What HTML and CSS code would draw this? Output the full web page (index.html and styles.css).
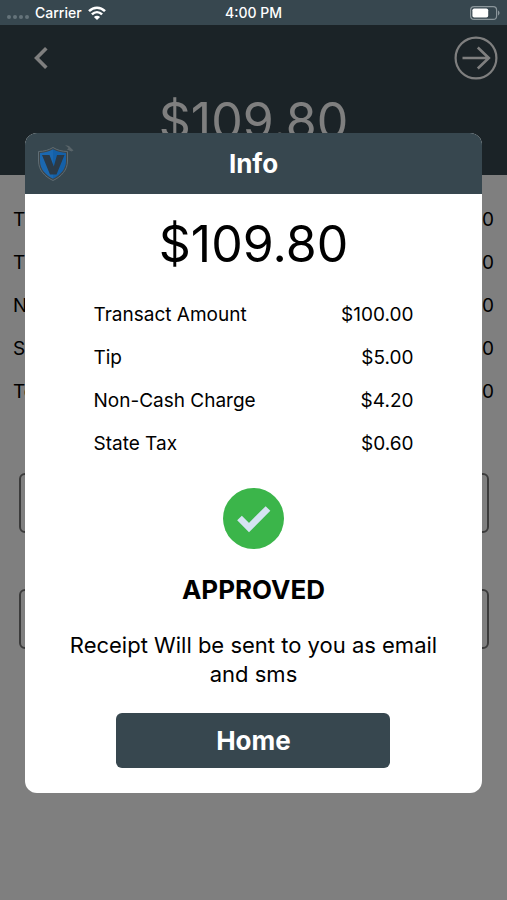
FILE: index.html
```html
<!DOCTYPE html>
<html lang="en">

<head>
  <meta charset="UTF-8">
  <meta name="viewport" content="width=device-width, initial-scale=1.0">
  <title>Payment Info</title>
  <link rel="stylesheet" href="styles.css">
</head>

<body>
  <div class="status-bar">
    <div class="status-left">
      <span class="signal"><i></i><i></i><i></i><i></i></span>
      <span>Carrier</span>
      <svg class="wifi" viewBox="0 0 18 14" width="18" height="14" fill="none" stroke="#fff" stroke-width="2.5">
        <path d="M1 5.2C5.6 .6 12.4 .6 17 5.2" />
        <path d="M3.9 8.3C6.9 5.4 11.1 5.4 14.1 8.3" />
        <path d="M9 14L5.9 10.9C7.6 9.2 10.4 9.2 12.1 10.9Z" fill="#fff" stroke="none" />
      </svg>
    </div>
    <span class="status-time">4:00 PM</span>
    <div class="status-right">
      <svg viewBox="0 0 30 14" width="30" height="14">
        <rect x=".6" y=".6" width="26" height="12.8" rx="3.5" fill="none" stroke="#8b969b" stroke-width="1.2" />
        <rect x="2.4" y="2.4" width="15.8" height="9.2" rx="1.8" fill="#fff" />
        <path d="M28 4.6C30 5.4 30 8.6 28 9.4Z" fill="#8b969b" />
      </svg>
    </div>
  </div>

  <div class="screen">
    <div class="page">
      <div class="page-header">
        <div class="page-nav">
          <button class="icon-button" aria-label="Back">
            <svg viewBox="0 0 14 22" width="14" height="22" fill="none" stroke="#fff" stroke-width="3.6">
              <path d="M12.3 1.3L2.6 11L12.3 20.7" />
            </svg>
          </button>
          <button class="icon-button" aria-label="Next">
            <svg viewBox="0 0 44 44" width="44" height="44" fill="none" stroke="#fff" stroke-width="2.2">
              <circle cx="22" cy="22" r="20.4" />
              <path d="M8.5 22H34.5M23.8 11.5L34.8 22L23.8 32.5" stroke-width="2.6" />
            </svg>
          </button>
        </div>
        <div class="amount">$109.80</div>
      </div>
      <dl class="rows page-rows">
        <div class="row"><dt>Transact Amount</dt><dd>$100.00</dd></div>
        <div class="row"><dt>Tip</dt><dd>$5.00</dd></div>
        <div class="row"><dt>Non-Cash Charge</dt><dd>$4.20</dd></div>
        <div class="row"><dt>State Tax</dt><dd>$0.60</dd></div>
        <div class="row"><dt>Total</dt><dd>$109.80</dd></div>
      </dl>
      <div class="page-inputs">
        <input type="email" aria-label="Email">
        <input type="tel" aria-label="Phone number">
      </div>
    </div>

    <div class="overlay">
      <div class="modal" role="dialog" aria-labelledby="modal-title">
        <div class="modal-header">
          <svg class="logo" viewBox="0 0 38 38" width="38" height="38">
            <path d="M1.5 7.5C7 7.5 12 6 16 3.5C20 6 25 7.5 30.5 7.5V17C30.5 26 24.5 32.5 16 36.5C7.5 32.5 1.5 26 1.5 17Z" fill="#3d4549" stroke="#5f6d74" stroke-width="1" />
            <path d="M3 9C8 8.8 12 7.5 16 5.3V34.8C8.500 31 3 25 3 17Z" fill="#1b68b0" />
            <path d="M16 5.3C20 7.5 24 8.8 29 9V17C29 25 23.5 31 16 34.8Z" fill="#1460a8" />
            <path d="M5 11H12.5L16.8 22.5L20 11H27.5L19.5 30.5H13Z" fill="#2b3a47" />
            <path d="M28 1L32 2L36.5 6.5L34.5 7.5L30 5.5L31.5 4Z" fill="#596469" />
          </svg>
          <h1 id="modal-title">Info</h1>
        </div>
        <div class="modal-body">
          <div class="amount">$109.80</div>
          <dl class="rows modal-rows">
            <div class="row"><dt>Transact Amount</dt><dd>$100.00</dd></div>
            <div class="row"><dt>Tip</dt><dd>$5.00</dd></div>
            <div class="row"><dt>Non-Cash Charge</dt><dd>$4.20</dd></div>
            <div class="row"><dt>State Tax</dt><dd>$0.60</dd></div>
          </dl>
          <svg class="check" viewBox="0 0 61 61" width="61" height="61">
            <circle cx="30.5" cy="30.5" r="30.5" fill="#3bb54a" />
            <path d="M16.5 30L26 39.5L45 20.5" fill="none" stroke="#d5e3f2" stroke-width="6.6" />
          </svg>
          <h2>APPROVED</h2>
          <p class="message">Receipt Will be sent to you as email and sms</p>
          <button class="home-button">Home</button>
        </div>
      </div>
    </div>
  </div>
</body>

</html>
```
FILE: styles.css
```css
* {
  box-sizing: border-box;
}

body {
  margin: 0;
  min-height: 100vh;
  display: flex;
  flex-direction: column;
  font-family: Inter, "Liberation Sans", sans-serif;
  color: #000;
  background: #fff;
}

button {
  font-family: inherit;
  border: none;
  cursor: pointer;
}

.status-bar {
  display: grid;
  grid-template-columns: 1fr auto 1fr;
  align-items: center;
  height: 25px;
  padding: 0 7px;
  background: #37474f;
  color: #fff;
  font-size: 14px;
  font-weight: 500;
}

.status-left {
  display: flex;
  align-items: center;
  gap: 6px;
}

.signal {
  display: flex;
  gap: 2px;
  padding-top: 8px;
}

.signal i {
  width: 4px;
  height: 4px;
  border-radius: 50%;
  background: #65737a;
}

.status-right {
  display: flex;
  justify-content: flex-end;
}

.screen {
  position: relative;
  flex: 1;
}

.page-header {
  height: 150px;
  background: #37474f;
  color: #fff;
}

.page-nav {
  display: flex;
  justify-content: space-between;
  align-items: center;
  height: 66px;
  padding: 0 9px 0 34px;
}

.icon-button {
  display: flex;
  padding: 0;
  background: none;
}

.amount {
  font-size: 50px;
  line-height: 60px;
  text-align: center;
}

.rows {
  margin: 0;
  font-size: 19px;
}

.row {
  display: flex;
  justify-content: space-between;
  align-items: center;
  height: 43px;
}

.row dd {
  margin: 0;
}

.page-rows {
  padding: 23px 13px 0;
}

.page-inputs {
  display: flex;
  flex-direction: column;
  gap: 56px;
  padding: 60px 18px 0 19px;
}

.page-inputs input {
  width: 100%;
  height: 60px;
  border: 2px solid #777;
  border-radius: 6px;
  background: transparent;
}

.overlay {
  position: absolute;
  inset: 0;
  display: flex;
  align-items: center;
  justify-content: center;
  background: rgba(0, 0, 0, 0.5);
}

.modal {
  width: 90%;
  border-radius: 12px;
  overflow: hidden;
  background: #fff;
}

.modal-header {
  display: grid;
  grid-template-columns: 1fr auto 1fr;
  align-items: center;
  height: 61px;
  padding: 0 12px;
  background: #37474f;
  color: #fff;
}

.modal-header h1 {
  margin: 0;
  font-size: 26px;
  font-weight: 700;
}

.modal-body {
  display: flex;
  flex-direction: column;
  align-items: center;
  padding: 20px 25px 25px;
}

.modal-rows {
  width: 320px;
  max-width: 100%;
  margin: 19px 0 23px;
}

.modal-body h2 {
  margin: 24px 0;
  font-size: 26px;
  line-height: 34px;
  font-weight: 700;
}

.message {
  margin: 0 0 24px;
  padding: 0 15px;
  font-size: 22px;
  line-height: 29px;
  text-align: center;
}

.home-button {
  width: 274px;
  max-width: 100%;
  height: 55px;
  border-radius: 6px;
  background: #37474f;
  color: #fff;
  font-size: 26px;
  font-weight: 700;
}
```
